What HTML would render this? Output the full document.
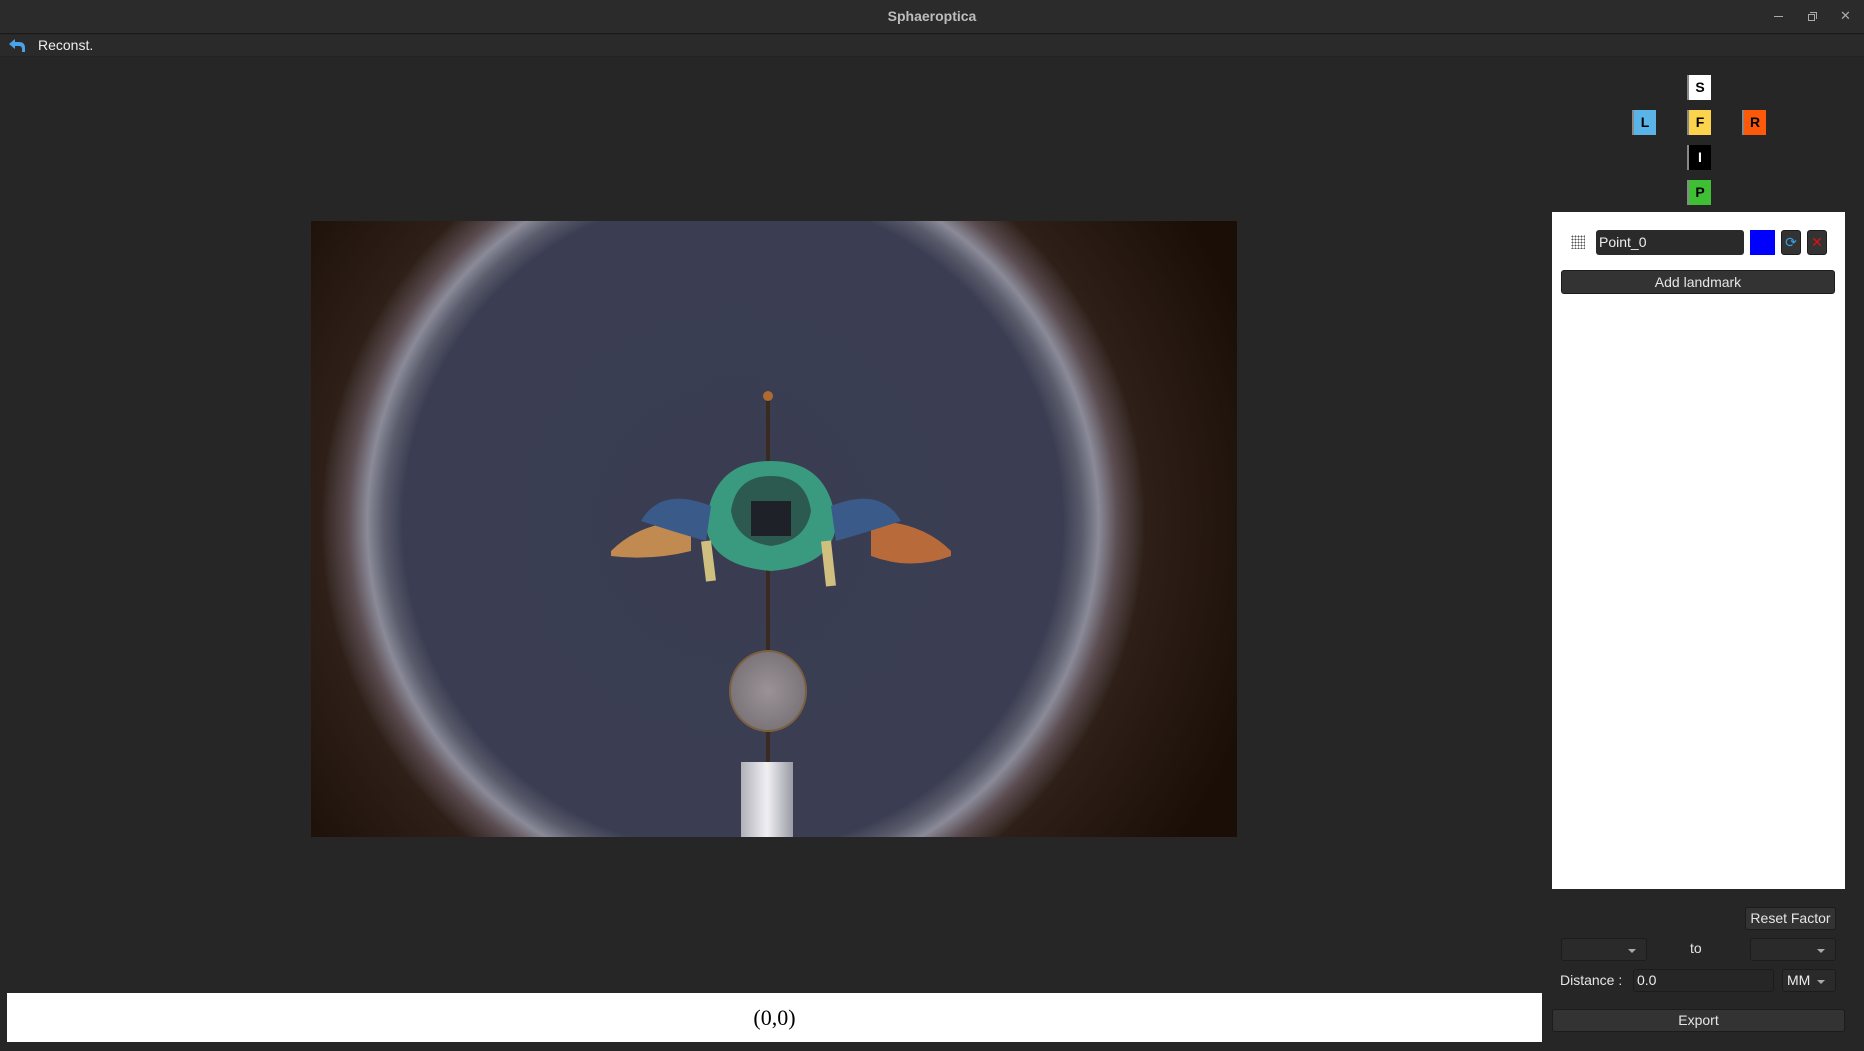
<!DOCTYPE html>
<html><head><meta charset="utf-8"><style>
*{box-sizing:border-box;margin:0;padding:0}
body{width:1864px;height:1051px;background:#262626;font-family:"Liberation Sans","DejaVu Sans",sans-serif;color:#ddd;position:relative;overflow:hidden}
.abs{position:absolute}
.title{left:0;top:0;width:1864px;height:34px;background:#2b2b2b;border-bottom:1px solid #1a1a1a;text-align:center;line-height:32px;font-size:14px;font-weight:bold;color:#bdbdbd}
.menu{left:0;top:35px;width:1864px;height:22px;background:#2a2a2a;border-bottom:1px solid #222}
.vb{width:24px;height:25px;font-weight:bold;font-size:14px;text-align:center;line-height:25px;border-left:2px solid #888;color:#000}
.btn{background:#333;border:1px solid #1c1c1c;border-radius:3px;color:#e6e6e6;font-size:14px;text-align:center}
.combo{background:#2a2a2a;border:1px solid #1c1c1c;border-radius:3px}
.combo:after{content:"";position:absolute;right:10px;top:10px;border:4px solid transparent;border-top:4px solid #aaa}
</style></head><body>
<div class="abs title">Sphaeroptica</div>
<div class="abs" style="left:1774px;top:16px;width:9px;height:1px;background:#aaa"></div>
<div class="abs" style="left:1808px;top:14px;width:7px;height:7px;border:1px solid #aaa"></div>
<div class="abs" style="left:1810px;top:12px;width:7px;height:7px;border-top:1px solid #aaa;border-right:1px solid #aaa"></div>
<div class="abs" style="left:1840px;top:8px;font-size:13px;color:#aaa">✕</div>
<div class="abs menu"></div>
<svg class="abs" style="left:8px;top:37px" width="18" height="16" viewBox="0 0 18 16"><path d="M7 2 L1 7 L7 12 V9 H11 Q14 9 14 12 V15 H17 V11 Q17 5 11 5 H7 Z" fill="#4aa3e8"/></svg>
<div class="abs" style="left:38px;top:37px;font-size:14px;color:#eee">Reconst.</div>

<svg class="abs" style="left:311px;top:221px" width="926" height="616" viewBox="0 0 926 616">
<defs>
<radialGradient id="bg" cx="422" cy="302" r="550" gradientUnits="userSpaceOnUse">
<stop offset="0" stop-color="#3a3d52"/><stop offset="0.6" stop-color="#3b3e52"/>
<stop offset="0.635" stop-color="#5a5c6c"/><stop offset="0.665" stop-color="#8a8a98"/>
<stop offset="0.7" stop-color="#5a4c50"/><stop offset="0.75" stop-color="#2e2018"/>
<stop offset="1" stop-color="#1a0e06"/></radialGradient>
<radialGradient id="disc"><stop offset="0" stop-color="#9a9296"/><stop offset="1" stop-color="#7b7478"/></radialGradient>
<linearGradient id="blk" x1="0" x2="1"><stop offset="0" stop-color="#b0b0b8"/><stop offset="0.5" stop-color="#f0f0f4"/><stop offset="1" stop-color="#9a9aa4"/></linearGradient>
</defs>
<rect width="926" height="616" fill="url(#bg)"/>
<line x1="457" y1="175" x2="457" y2="545" stroke="#3a2a20" stroke-width="4"/>
<circle cx="457" cy="175" r="5" fill="#b06a30"/>
<path d="M300 330 Q330 300 380 300 L380 330 Q340 340 300 335Z" fill="#c08a50"/>
<path d="M640 330 Q610 300 560 300 L560 335 Q600 350 640 335Z" fill="#b86a3a"/>
<path d="M395 305 Q400 240 460 240 Q520 240 525 305 Q520 345 460 350 Q400 345 395 305Z" fill="#3a9a80"/>
<path d="M420 290 Q425 255 460 255 Q495 255 500 290 Q495 320 460 325 Q425 320 420 290Z" fill="#2d5a50"/>
<path d="M440 280 h40 v35 h-40z" fill="#1e2228"/>
<path d="M330 300 Q350 265 400 285 L395 320 Q360 310 330 300Z" fill="#3a5a8a"/>
<path d="M590 300 Q570 265 520 285 L525 320 Q560 310 590 300Z" fill="#3a5a8a"/>
<path d="M395 320 L400 360" stroke="#d0c080" stroke-width="10"/>
<path d="M515 320 L520 365" stroke="#d0c080" stroke-width="10"/>
<ellipse cx="457" cy="470" rx="38" ry="40" fill="url(#disc)" stroke="#7a6040" stroke-width="2"/>
<rect x="430" y="541" width="52" height="75" fill="url(#blk)"/>
</svg>

<div class="abs" style="left:7px;top:993px;width:1535px;height:49px;background:#fff;color:#000;font-family:'Liberation Serif',serif;font-size:22px;text-align:center;line-height:49px">(0,0)</div>

<div class="abs vb" style="left:1687px;top:75px;background:#fff">S</div>
<div class="abs vb" style="left:1632px;top:110px;background:#5ab4e8">L</div>
<div class="abs vb" style="left:1687px;top:110px;background:#fcd34d">F</div>
<div class="abs vb" style="left:1742px;top:110px;background:#fc5a0a">R</div>
<div class="abs vb" style="left:1687px;top:145px;background:#000;color:#fff">I</div>
<div class="abs vb" style="left:1687px;top:180px;background:#3fbf34">P</div>

<div class="abs" style="left:1552px;top:212px;width:293px;height:677px;background:#fff"></div>
<div class="abs" style="left:1571px;top:235px;width:14px;height:14px;background-image:radial-gradient(#555 0.8px,transparent 1px);background-size:3px 3px"></div>
<div class="abs" style="left:1596px;top:230px;width:148px;height:25px;background:#2a2a2a;border-radius:3px;color:#eee;font-size:14px;line-height:25px;padding-left:3px">Point_0</div>
<div class="abs" style="left:1750px;top:230px;width:25px;height:25px;background:#00f"></div>
<div class="abs" style="left:1781px;top:230px;width:20px;height:25px;background:#333;border:1px solid #1c1c1c;border-radius:3px;color:#3aa0e8;font-size:14px;text-align:center;line-height:22px">⟳</div>
<div class="abs" style="left:1807px;top:230px;width:20px;height:25px;background:#333;border:1px solid #1c1c1c;border-radius:3px;color:#d11;font-size:14px;font-weight:bold;text-align:center;line-height:23px">✕</div>
<div class="abs btn" style="left:1561px;top:270px;width:274px;height:24px;line-height:22px">Add landmark</div>

<div class="abs btn" style="left:1745px;top:907px;width:91px;height:23px;line-height:21px">Reset Factor</div>
<div class="abs combo" style="left:1561px;top:938px;width:86px;height:23px"></div>
<div class="abs" style="left:1690px;top:940px;font-size:14px;color:#e6e6e6">to</div>
<div class="abs combo" style="left:1750px;top:938px;width:86px;height:23px"></div>
<div class="abs" style="left:1560px;top:972px;font-size:14px;color:#e6e6e6">Distance :</div>
<div class="abs" style="left:1633px;top:969px;width:141px;height:23px;background:#262626;border:1px solid #1c1c1c;border-radius:3px;font-size:14px;color:#eee;line-height:21px;padding-left:3px">0.0</div>
<div class="abs combo" style="left:1782px;top:969px;width:54px;height:23px;font-size:14px;color:#eee;line-height:21px;padding-left:4px">MM</div>
<div class="abs btn" style="left:1552px;top:1009px;width:293px;height:23px;line-height:21px">Export</div>
</body></html>
